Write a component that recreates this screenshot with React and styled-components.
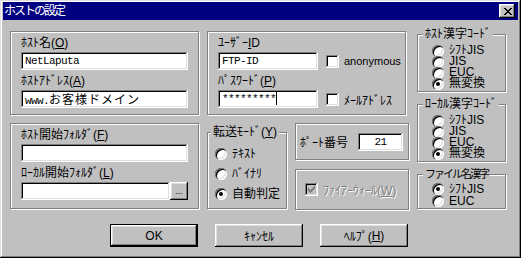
import React from 'react';
import styled, { createGlobalStyle } from 'styled-components';

const GlobalStyle = createGlobalStyle`
  html, body {
    margin: 0;
    padding: 0;
    background: #c0c0c0;
  }
  body {
    font-family: "Liberation Sans", "Noto Sans CJK JP", sans-serif;
    font-size: 12px;
    color: #000;
  }
`;

const CLOSE = ['##....##', '.##..##.', '..####..', '...##...', '..####..', '.##..##.', '##....##'];
const CHECK = ['......#', '.....##', '#...###', '##.###.', '#####..', '.###...', '..#....'];

const pixels = (rows, color) =>
  rows.flatMap((row, y) =>
    [...row].map((c, x) =>
      c === '#' ? <rect key={`${x}-${y}`} x={x} y={y} width="1" height="1" fill={color} /> : null
    )
  );

const raised = `
  box-shadow: inset -1px -1px #000, inset 1px 1px #fff, inset -2px -2px #808080, inset 2px 2px #dfdfdf;
`;
const sunken = `
  box-shadow: inset -1px -1px #fff, inset 1px 1px #808080, inset -2px -2px #dfdfdf, inset 2px 2px #000;
`;

const Window = styled.div`
  box-sizing: border-box;
  width: 521px;
  height: 258px;
  padding: 2px 3px 3px;
  background: #c0c0c0;
  box-shadow: inset -1px -1px #000, inset 1px 1px #dfdfdf, inset -2px -2px #808080, inset 2px 2px #fff;
  display: flex;
  flex-direction: column;
`;

const TitleBar = styled.div`
  height: 18px;
  background: #000080;
  color: #fff;
  display: flex;
  align-items: center;
  justify-content: space-between;
  padding: 0 3px 0 1px;
`;

const Title = styled.span`
  letter-spacing: -2px;
  line-height: 18px;
`;

const CloseButton = styled.div`
  box-sizing: border-box;
  width: 16px;
  height: 14px;
  background: #c0c0c0;
  ${raised}
  display: flex;
  align-items: center;
  justify-content: center;
  padding-left: 1px;
  svg { display: block; }
`;

const Body = styled.div`
  display: flex;
  flex-direction: column;
  padding: 8px 0 0 7px;
`;

const MainRow = styled.div`
  display: flex;
  align-items: flex-start;
  gap: 8px;
`;

const Column = styled.div`
  display: flex;
  flex-direction: column;
  width: ${p => p.$w}px;
  margin-top: ${p => p.$top || 0}px;
  gap: ${p => p.$gap || 0}px;
`;

const SubRow = styled.div`
  display: flex;
  align-items: flex-start;
  gap: 8px;
`;

const Panel = styled.div`
  position: relative;
  box-sizing: border-box;
  width: ${p => p.$w}px;
  height: ${p => p.$h}px;
  margin-top: ${p => p.$top || 0}px;
  border: 1px solid #808080;
  box-shadow: inset 1px 1px #fff, 1px 1px #fff;
  padding: ${p => p.$pad || '0'};
  display: flex;
  flex-direction: ${p => (p.$row ? 'row' : 'column')};
  align-items: ${p => (p.$row ? 'center' : 'stretch')};
  justify-content: ${p => (p.$between ? 'space-between' : 'flex-start')};
`;

const Legend = styled.span`
  position: absolute;
  top: -8px;
  left: ${p => p.$left ?? 5}px;
  padding: 0 2px;
  background: #c0c0c0;
  line-height: 14px;
  white-space: nowrap;
  font-size: ${p => p.$size || 12}px;
  letter-spacing: ${p => p.$spacing || 0}px;
`;

const Label = styled.div`
  line-height: 14px;
  height: 14px;
  margin: ${p => p.$top || 0}px 0 2px;
  white-space: nowrap;
`;

const Field = styled.div`
  box-sizing: border-box;
  width: ${p => p.$w}px;
  height: 18px;
  padding: 0 4px;
  background: #fff;
  ${sunken}
  font-family: "Liberation Mono", "Noto Sans CJK JP", monospace;
  font-size: 11px;
  letter-spacing: -0.6px;
  line-height: 18px;
  white-space: nowrap;
  overflow: hidden;
  text-align: ${p => (p.$center ? 'center' : 'left')};
  flex-shrink: 0;
`;

const Wide = styled.span`
  font-family: "Noto Sans CJK JP", sans-serif;
  font-size: 12px;
  letter-spacing: 1px;
`;

const Caret = styled.span`
  display: inline-block;
  width: 1px;
  height: 14px;
  background: #000;
  vertical-align: middle;
  margin-top: -2px;
`;

const FieldRow = styled.div`
  display: flex;
  align-items: center;
`;

const CheckLabel = styled.div`
  display: flex;
  align-items: center;
  gap: 5px;
  margin-left: ${p => (p.$flush ? 0 : 8)}px;
  white-space: nowrap;
  font-size: ${p => p.$size || 12}px;
  color: ${p => (p.$disabled ? '#808080' : '#000')};
  text-shadow: ${p => (p.$disabled ? '1px 1px #fff' : 'none')};
`;

const Box = styled.span`
  box-sizing: border-box;
  width: 13px;
  height: 13px;
  flex-shrink: 0;
  background: ${p => (p.$disabled ? '#c0c0c0' : '#fff')};
  ${sunken}
  display: flex;
  align-items: center;
  justify-content: center;
  svg { display: block; }
`;

const SmallButton = styled.div`
  box-sizing: border-box;
  width: 18px;
  height: 18px;
  background: #c0c0c0;
  ${raised}
  font-size: 9px;
  line-height: 9px;
  display: flex;
  align-items: flex-end;
  justify-content: center;
  padding-bottom: 4px;
`;

const RadioRow = styled.div`
  display: flex;
  align-items: center;
  gap: 5px;
  height: ${p => p.$h}px;
  white-space: nowrap;
`;

const RadioText = styled.span`
  display: block;
  height: ${p => p.$h}px;
  line-height: ${p => p.$h}px;
  overflow: visible;
`;

const RadioDot = styled.span`
  position: relative;
  box-sizing: border-box;
  width: 12px;
  height: 12px;
  flex-shrink: 0;
  border-radius: 50%;
  background: #fff;
  box-shadow: inset 1px 1px #808080, inset 2px 2px #000, inset -1px -1px #fff, inset -2px -2px #dfdfdf;
  &::after {
    content: '';
    display: ${p => (p.$checked ? 'block' : 'none')};
    position: absolute;
    left: 4px;
    top: 4px;
    width: 4px;
    height: 4px;
    border-radius: 50%;
    background: #000;
  }
`;

const ButtonRow = styled.div`
  display: flex;
  gap: 17px;
  margin-top: 14px;
  padding-left: 100px;
`;

const Button = styled.div`
  box-sizing: border-box;
  width: 88px;
  height: 23px;
  background: #c0c0c0;
  display: flex;
  align-items: center;
  justify-content: center;
  white-space: nowrap;
  ${raised}
  ${p =>
    p.$default &&
    `
    box-shadow: inset 0 0 0 1px #000, inset -2px -2px #000, inset 2px 2px #fff, inset -3px -3px #808080, inset 3px 3px #dfdfdf;
  `}
`;

const Radio = ({ label, checked, h }) => (
  <RadioRow $h={h}>
    <RadioDot $checked={checked} />
    <RadioText $h={h}>{label}</RadioText>
  </RadioRow>
);

const Checkbox = ({ label, checked, disabled, flush, size }) => (
  <CheckLabel $disabled={disabled} $flush={flush} $size={size}>
    <Box $disabled={disabled}>
      {checked && (
        <svg width="7" height="7" shapeRendering="crispEdges">
          {pixels(CHECK, disabled ? '#808080' : '#000')}
        </svg>
      )}
    </Box>
    <span>{label}</span>
  </CheckLabel>
);

const codes = ['ｼﾌﾄJIS', 'JIS', 'EUC', '無変換'];

export default function App() {
  return (
    <>
      <GlobalStyle />
      <Window>
        <TitleBar>
          <Title>ホストの設定</Title>
          <CloseButton>
            <svg width="8" height="7" shapeRendering="crispEdges">
              {pixels(CLOSE, '#000')}
            </svg>
          </CloseButton>
        </TitleBar>
        <Body>
          <MainRow>
            <Column $w={189} $top={3} $gap={8}>
              <Panel $w={189} $h={84} $pad="4px 10px 0">
                <Label>ﾎｽﾄ名(<u>O</u>)</Label>
                <Field $w={167}>NetLaputa</Field>
                <Label $top={4}>ﾎｽﾄｱﾄﾞﾚｽ(<u>A</u>)</Label>
                <Field $w={167}>
                  www.<Wide>お客様ドメイン</Wide>
                </Field>
              </Panel>
              <Panel $w={189} $h={86} $pad="4px 10px 0">
                <Label>ﾎｽﾄ開始ﾌｫﾙﾀﾞ(<u>F</u>)</Label>
                <Field $w={167} />
                <Label $top={4}>ﾛｰｶﾙ開始ﾌｫﾙﾀﾞ(<u>L</u>)</Label>
                <FieldRow>
                  <Field $w={149} />
                  <SmallButton>...</SmallButton>
                </FieldRow>
              </Panel>
            </Column>

            <Column $w={202} $top={3} $gap={8}>
              <Panel $w={199} $h={84} $pad="4px 10px 0">
                <Label>ﾕｰｻﾞｰ<u>I</u>D</Label>
                <FieldRow>
                  <Field $w={100}>FTP-ID</Field>
                  <Checkbox label="anonymous" size={11} />
                </FieldRow>
                <Label $top={4}>ﾊﾟｽﾜｰﾄﾞ(<u>P</u>)</Label>
                <FieldRow>
                  <Field $w={100}>
                    *********
                    <Caret />
                  </Field>
                  <Checkbox label="ﾒｰﾙｱﾄﾞﾚｽ" />
                </FieldRow>
              </Panel>
              <SubRow>
                <Panel $w={80} $h={77} $top={9} $pad="11px 0 0 7px">
                  <Legend $left={3}>転送ﾓｰﾄﾞ(<u>Y</u>)</Legend>
                  <Radio h={20} label="ﾃｷｽﾄ" />
                  <Radio h={20} label="ﾊﾞｲﾅﾘ" />
                  <Radio h={20} label="自動判定" checked />
                </Panel>
                <Column $w={114} $gap={9}>
                  <Panel $w={114} $h={37} $row $between $pad="0 5px 0 4px">
                    <span>ﾎﾟｰﾄ番号</span>
                    <Field $w={45} $center>21</Field>
                  </Panel>
                  <Panel $w={114} $h={41} $row $pad="0 0 0 9px">
                    <Checkbox
                      flush
                      disabled
                      checked
                      label={<>ﾌｧｲｱｰｳｫｰﾙ(<u>W</u>)</>}
                    />
                  </Panel>
                </Column>
              </SubRow>
            </Column>

            <Column $w={90} $top={6} $gap={12}>
              <Panel $w={89} $h={58} $pad="10px 0 0 14px">
                <Legend>ﾎｽﾄ漢字ｺｰﾄﾞ</Legend>
                {codes.map((c, i) => (
                  <Radio key={c} h={11} label={c} checked={i === 3} />
                ))}
              </Panel>
              <Panel $w={89} $h={58} $pad="10px 0 0 14px">
                <Legend>ﾛｰｶﾙ漢字ｺｰﾄﾞ</Legend>
                {codes.map((c, i) => (
                  <Radio key={c} h={11} label={c} checked={i === 3} />
                ))}
              </Panel>
              <Panel $w={89} $h={35} $pad="8px 0 0 14px">
                <Legend $size={11} $spacing={-2}>ファイル名漢字</Legend>
                <Radio h={12} label="ｼﾌﾄJIS" checked />
                <Radio h={12} label="EUC" />
              </Panel>
            </Column>
          </MainRow>

          <ButtonRow>
            <Button $default>OK</Button>
            <Button>ｷｬﾝｾﾙ</Button>
            <Button>ﾍﾙﾌﾟ(<u>H</u>)</Button>
          </ButtonRow>
        </Body>
      </Window>
    </>
  );
}
